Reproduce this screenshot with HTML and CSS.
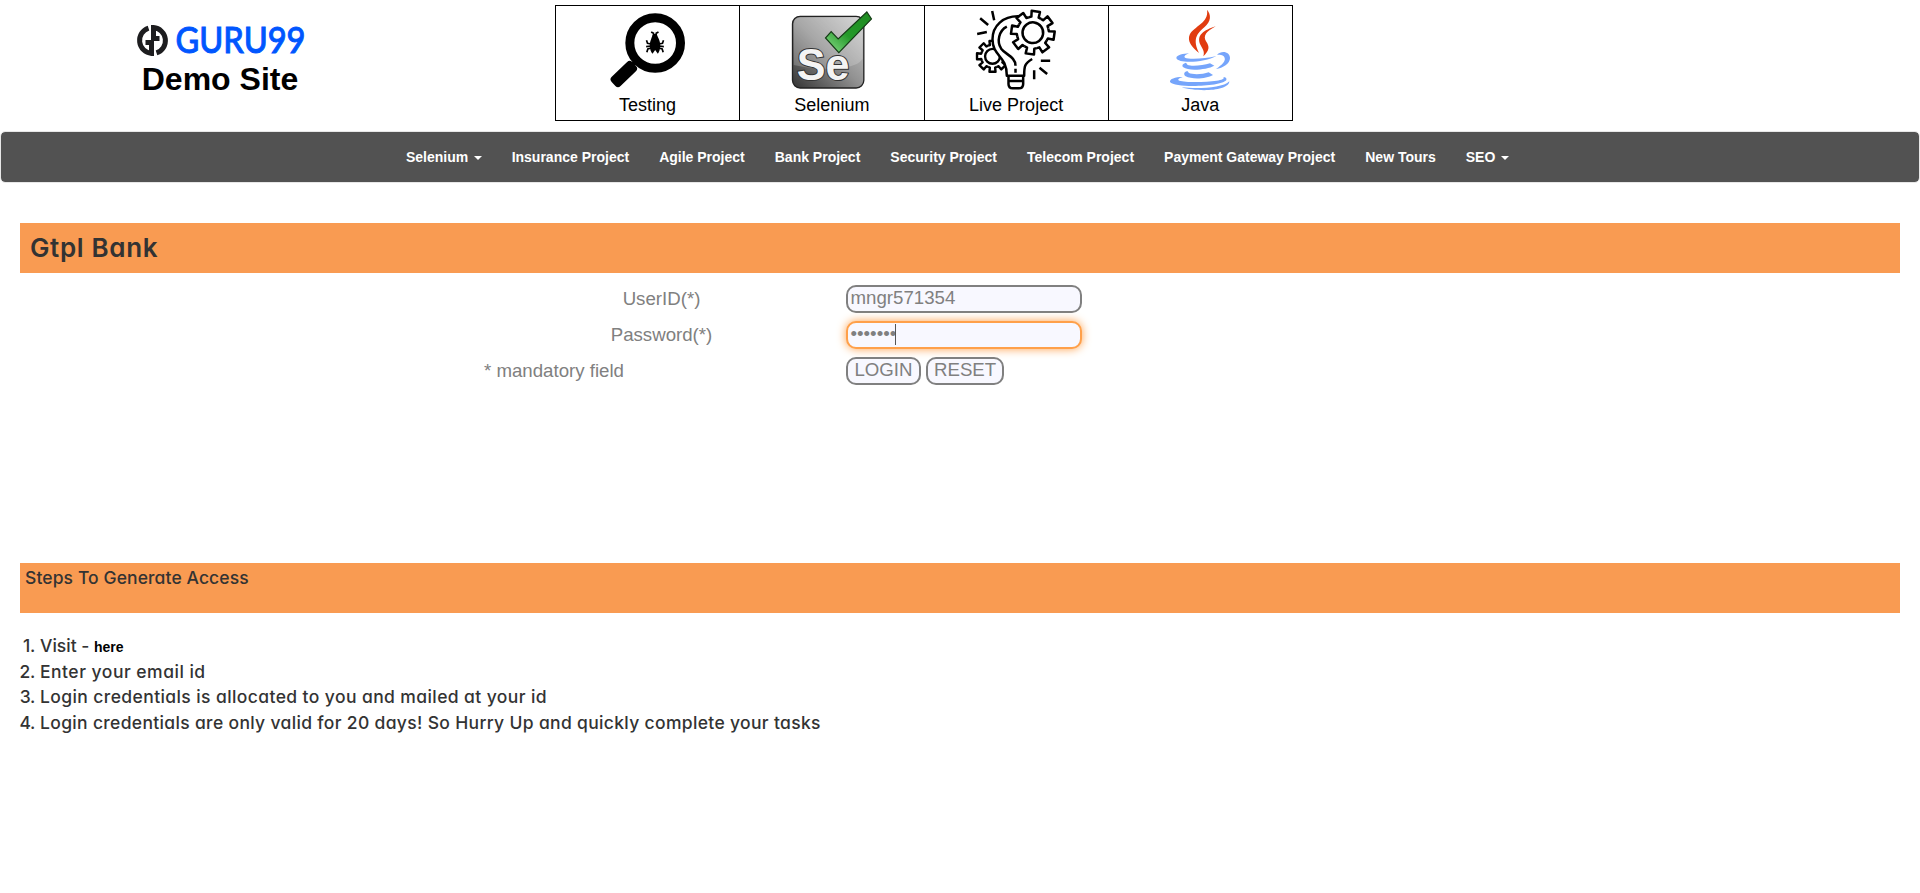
FILE: index.html
```html
<!DOCTYPE html>
<html lang="en">
<head>
<meta charset="utf-8">
<title>Gtpl Bank Home Page</title>
<link rel="stylesheet" href="styles.css">
</head>
<body>
<header class="top">
  <div class="brand">
    <svg class="logo" viewBox="-3 -6 176 46" role="img" aria-label="GURU99">
      <g fill="none" stroke="#1d1d1f" stroke-width="5">
        <path d="M13.500 4.100A13 13 0 0 0 16.500 29.400V18.500H10.500"/>
        <path d="M21.500 28.900A13 13 0 0 0 18.500 3.600V14.500H24.500"/>
      </g>
      <text class="wordmark" x="40.500" y="28.500" textLength="130" lengthAdjust="spacingAndGlyphs">GURU99</text>
    </svg>
    <h2 class="demo">Demo Site</h2>
  </div>
  <div class="tiles">
    <a class="tile">
      <svg class="pic" viewBox="173.500 24 240 240">
        <circle cx="315" cy="129" r="76" fill="none" stroke="#000" stroke-width="27"/>
        <path d="M262 180L240 202" stroke="#000" stroke-width="13"/>
        <rect x="-43" y="-19" width="86" height="38" rx="11" transform="translate(221 222) rotate(-44)"/>
        <path d="M314 102C322 102 322 110 326 117C332 130 332 150 323 161L315 150L307 161C297 150 297 130 303 117C306 110 306 102 314 102Z"/>
        <path d="M303 96L310 100V108M325 96L318 100V108M289 121L292 130L303 132M340 121L337 130L326 132M288 140L303 138M341 140L326 138M290 157L293 147L303 144M339 157L336 147L326 144" fill="none" stroke="#000" stroke-width="5"/>
      </svg>
      <span>Testing</span>
    </a>
    <a class="tile">
      <svg class="pic" viewBox="171.500 24 240 240">
        <defs>
          <linearGradient id="plate" x1="1" y1="0" x2="0" y2="1"><stop offset="0" stop-color="#d0d0d0"/><stop offset=".5" stop-color="#929292"/><stop offset="1" stop-color="#333"/></linearGradient>
          <linearGradient id="tick" x1="1" y1="0" x2="0" y2="1"><stop offset="0" stop-color="#1e8a20"/><stop offset=".55" stop-color="#259a2a"/><stop offset="1" stop-color="#8ee08e"/></linearGradient>
        </defs>
        <rect x="173" y="49" width="214" height="215" rx="23" fill="url(#plate)" stroke="#222" stroke-width="4"/>
        <path d="M177 70Q178 53 195 53H365Q382 53 383 70V175C370 212 250 213 177 195Z" fill="#fff" opacity=".2"/>
        <text class="se" x="186" y="241" textLength="158" lengthAdjust="spacingAndGlyphs">Se</text>
        <path d="M272 114L289 95L310 117L396 36L410 57L312 158Z" fill="url(#tick)" stroke="#153c16" stroke-width="3.500"/>
      </svg>
      <span>Selenium</span>
    </a>
    <a class="tile">
      <svg class="pic" viewBox="169.500 24 240 240">
        <defs>
          <path id="tooth" d="M-18.400 -44.300L-11 -47L-12.600 -64.500H12.600L11 -47L18.400 -44.300"/>
          <g id="gear">
            <use href="#tooth"/><use href="#tooth" transform="rotate(45)"/><use href="#tooth" transform="rotate(90)"/><use href="#tooth" transform="rotate(135)"/>
            <use href="#tooth" transform="rotate(180)"/><use href="#tooth" transform="rotate(225)"/><use href="#tooth" transform="rotate(270)"/><use href="#tooth" transform="rotate(315)"/>
            <circle r="31"/>
          </g>
        </defs>
        <g fill="none" stroke="#000" stroke-width="7.500" stroke-linejoin="round">
          <use href="#gear" transform="translate(219 169) scale(.72)" stroke-width="10"/>
          <path fill="#fff" d="M296 49C250 47 219 78 219 118C219 170 262 165 262 227H314C314 200 315 190 338 177L338 80Z" stroke="none"/>
          <path d="M300 49C250 47 219 78 219 118C219 170 262 165 262 227H314C314 200 315 190 338 177"/>
          <path d="M262 80C238 92 231 125 245 146C258 164 288 170 288 197M288 206V218"/>
          <circle cx="338" cy="98" r="52" fill="#fff" stroke="none"/>
          <use href="#gear" transform="translate(340 98) rotate(8)"/>
          <path d="M267 227V252Q267 265 280 265H298Q311 265 311 252V227M267 243H311"/>
          <path d="M218 33L224 61M182 55L206 75M173 102L202 96M364 182H392M360 203L383 222M344 211V238"/>
        </g>
      </svg>
      <span>Live Project</span>
    </a>
    <a class="tile">
      <svg class="pic" viewBox="165 24 240 240">
        <g fill="#e13c10">
          <path d="M306 29C319 45 319 63 298 82C274 102 263 119 282 159C260 140 246 123 254 104C266 79 313 68 306 29Z"/>
          <path d="M332 79C304 95 293 107 303 124C315 141 313 152 295 169C300 154 292 147 287 136C272 105 297 91 332 79Z"/>
        </g>
        <g fill="#76a5fb">
          <path d="M252 160C235 161 215 165 214 174C219 192 300 188 334 168C302 176 253 179 240 173C235 169 243 163 252 160Z"/>
          <path d="M336 164C350 150 375 155 375 174C375 191 354 204 333 207C352 194 362 183 359 174C357 165 348 164 336 164Z"/>
          <path d="M243 188C232 191 230 197 235 202C251 214 307 209 328 197L315 190C294 197 259 199 248 195Z"/>
          <path d="M247 213C235 216 236 225 242 229C260 239 305 237 324 225L311 217C293 224 261 224 252 219Z"/>
          <path d="M233 231C210 231 193 237 195 246C210 265 351 260 364 240C366 235 361 231 355 231C360 236 350 240 335 242C302 247 242 248 223 242C215 238 224 234 233 231Z"/>
          <path d="M230 262C274 267 354 265 373 244C372 275 275 276 230 262Z"/>
        </g>
      </svg>
      <span>Java</span>
    </a>
  </div>
</header>
<nav class="menu">
  <a>Selenium<i class="caret"></i></a><a>Insurance Project</a><a>Agile Project</a><a>Bank Project</a><a>Security Project</a><a>Telecom Project</a><a>Payment Gateway Project</a><a>New Tours</a><a>SEO<i class="caret"></i></a>
</nav>
<main>
  <h2 class="band bank"><span>Gtpl Bank</span></h2>
  <form class="login">
    <label class="label">UserID(*)</label><div class="field">mngr571354</div>
    <label class="label">Password(*)</label><div class="field focus">•••••••<i class="cursor"></i></div>
    <span class="note">* mandatory field</span>
    <div class="actions"><button type="button">LOGIN</button><button type="button">RESET</button></div>
  </form>
  <h4 class="band steps-title"><span>Steps To Generate Access</span></h4>
  <ol class="steps">
    <li><b>1.</b><span class="visit">Visit - <a class="here">here</a></span></li>
    <li><b>2.</b><span class="enter">Enter your email id</span></li>
    <li><b>3.</b><span class="mailed">Login credentials is allocated to you and mailed at your id</span></li>
    <li><b>4.</b><span class="valid">Login credentials are only valid for 20 days! So Hurry Up and quickly complete your tasks</span></li>
  </ol>
</main>
</body>
</html>
```

FILE: styles.css
```css
* { box-sizing: border-box; }
body { margin: 0; background: #fff; font-family: "Liberation Sans", Arial, sans-serif; overflow: hidden; }
h2, h4, ol { margin: 0; padding: 0; }

.top { display: flex; height: 131px; }
.brand { width: 440px; margin-right: 115px; padding-top: 18px; display: flex; flex-direction: column; align-items: center; }
.logo { width: 176px; height: 46px; display: block; overflow: visible; }
.wordmark { font: 500 36px Lato, sans-serif; fill: #0056ff; stroke: #0056ff; stroke-width: .9px; }
.demo { font-size: 32px; line-height: 36px; margin-top: -3px; color: #000; }

.tiles { display: flex; width: 738px; height: 116px; margin-top: 5px; border: 1px solid #000; }
.tile { flex: 1; display: flex; flex-direction: column; align-items: center; padding-top: 2px; font-size: 18px; line-height: 26px; color: #000; }
.tile + .tile { border-left: 1px solid #000; }
.pic { width: 80px; height: 80px; overflow: visible; }
.tile span { padding-top: 4px; }
.se { font: bold 134px "Liberation Sans", sans-serif; fill: #f4f4f4; stroke: #333; stroke-width: 6px; paint-order: stroke; }

.menu { display: flex; height: 52px; padding-left: 390px; background: #525252; background-clip: padding-box; border: 1px solid #e7e7e7; border-radius: 5px; }
.menu a { padding: 0 15px; font-size: 14px; font-weight: bold; line-height: 50px; color: #fff; }
.caret { display: inline-block; margin-left: 5.4px; vertical-align: middle; border-top: 4px solid; border-left: 4px solid transparent; border-right: 4px solid transparent; }

main { padding: 40px 20px 0; font-family: Inter, "Open Sans", sans-serif; color: #333; font-feature-settings: "cv11"; }
.band { height: 50px; background: #f99b52; }
.bank { padding-left: 10px; font-size: 26px; line-height: 50px; font-weight: 600; letter-spacing: .65px; }
.login { display: grid; grid-template-columns: 355px 236px; column-gap: 7px; row-gap: 8px; margin: 12px 0 0 464px; font: 18.67px/28px "Liberation Sans", Arial, sans-serif; color: gray; height: 278px; align-content: start; font-feature-settings: normal; }
.label { text-align: center; }
.field, .actions button { height: 28px; border: 2px solid gray; border-radius: 10px; background: #f8f8ff; color: gray; font: inherit; line-height: 22px; }
.field { display: flex; align-items: flex-start; padding: 0 2.5px; }
.focus { border-color: #ffa04a; box-shadow: 0 0 10px #ffa04a; }
.cursor { width: 1px; height: 21px; background: #555; margin: 1px 0 0 -1px; }
.actions { display: flex; gap: 5px; }
.actions button { padding: 0 6px 2px; width: 75px; text-align: center; }
.actions button + button { width: 78px; }

.steps-title { padding: 3px 0 0 5px; font-size: 17.5px; line-height: 24px; font-weight: 500; letter-spacing: .1px; }
.steps { list-style: none; padding-top: 20px; font-size: 17.5px; line-height: 25.7px; font-weight: 500; }
.steps li { display: flex; height: 25.7px; }
.steps b { width: 15px; margin-right: 5px; font-weight: 500; display: flex; justify-content: flex-end; letter-spacing: -.3px; }
.enter { letter-spacing: .5px; }
.mailed { letter-spacing: .4px; }
.valid { letter-spacing: .33px; }
.here { font: bold 14px "Liberation Sans", Arial, sans-serif; color: #000; letter-spacing: 0; }
```
